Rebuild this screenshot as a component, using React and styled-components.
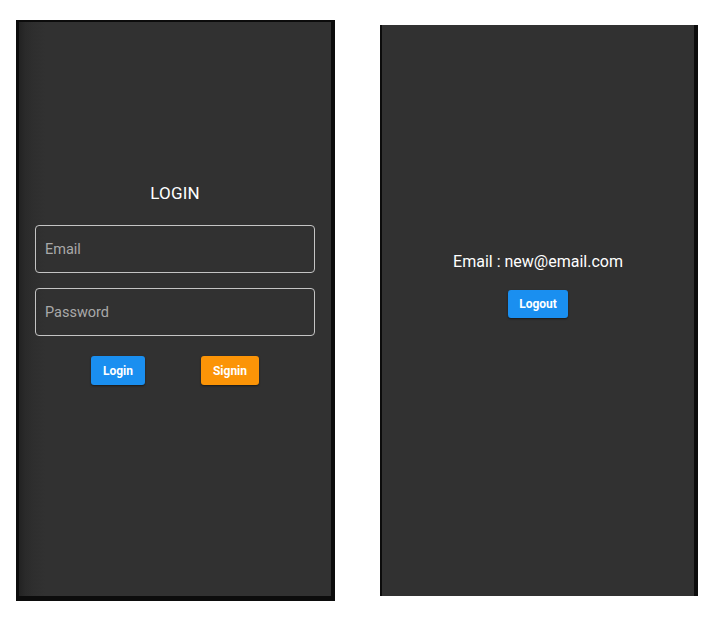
import styled, { createGlobalStyle } from "styled-components";

const GlobalStyle = createGlobalStyle`
    html, body {
        margin: 0;
        padding: 0;
        background: #ffffff;
        font-family: Roboto, "Liberation Sans", sans-serif;
    }
`;

const Page = styled.div`
    display: flex;
    align-items: center;
    gap: 45px;
    padding: 20px 0 0 16px;
    width: 727px;
    box-sizing: border-box;
`;

// 폰 화면 한 장
const Screen = styled.div`
    box-sizing: border-box;
    width: ${(p) => p.$width}px;
    height: ${(p) => p.$height}px;
    background: ${(p) =>
        p.$shaded
            ? "linear-gradient(to right, #222 0px, #2a2a2a 6px, #2e2e2e 14px, #313131 26px, #313131 100%)"
            : "#313131"};
    border-style: solid;
    border-color: #0c0c0c;
    border-width: ${(p) => p.$border};
    display: flex;
    flex-direction: column;
    align-items: center;
    padding-top: ${(p) => p.$top}px;
`;

const Title = styled.h1`
    margin: 0 0 22px;
    font-size: 17px;
    font-weight: 400;
    color: #ffffff;
    letter-spacing: 0.2px;
`;

const Form = styled.div`
    width: 280px;
    display: flex;
    flex-direction: column;
    gap: 15px;
`;

const Field = styled.input`
    box-sizing: border-box;
    width: 100%;
    height: 48px;
    padding: 0 9px;
    background: transparent;
    border: 1px solid #c4c4c4;
    border-radius: 4px;
    font-family: Roboto, "Liberation Sans", sans-serif;
    font-size: 14.5px;
    color: #ffffff;
    outline: none;

    &::placeholder {
        color: #a9a9a9;
    }
`;

const ButtonRow = styled.div`
    display: flex;
    justify-content: space-evenly;
    margin-top: 5px;
`;

const Button = styled.button`
    height: ${(p) => p.$h || 29}px;
    padding: 0 ${(p) => p.$pad}px;
    border: none;
    border-radius: 3px;
    background: ${(p) => p.$color};
    color: #ffffff;
    font-family: Roboto, "Liberation Sans", sans-serif;
    font-size: 12px;
    font-weight: 700;
    box-shadow: 0 1px 2px rgba(0, 0, 0, 0.5);
    cursor: pointer;
`;

const UserEmail = styled.p`
    margin: 0 0 19px;
    font-size: 16px;
    color: #ffffff;
`;

const App = () => {
    return (
        <>
            <GlobalStyle />
            <Page>
                <Screen $width={319} $height={581} $top={161} $border="2px 4px 5px 3px" $shaded>
                    <Title>LOGIN</Title>
                    <Form>
                        <Field type="email" placeholder="Email" />
                        <Field type="password" placeholder="Password" />
                        <ButtonRow>
                            <Button $color="#1a8ff0" $pad={12}>Login</Button>
                            <Button $color="#fb9407" $pad={12}>Signin</Button>
                        </ButtonRow>
                    </Form>
                </Screen>
                <Screen $width={318} $height={571} $top={227} $border="0 4px 0 2px">
                    <UserEmail>Email : new@email.com</UserEmail>
                    <Button $color="#1a8ff0" $pad={11} $h={28}>Logout</Button>
                </Screen>
            </Page>
        </>
    );
};

export default App;
